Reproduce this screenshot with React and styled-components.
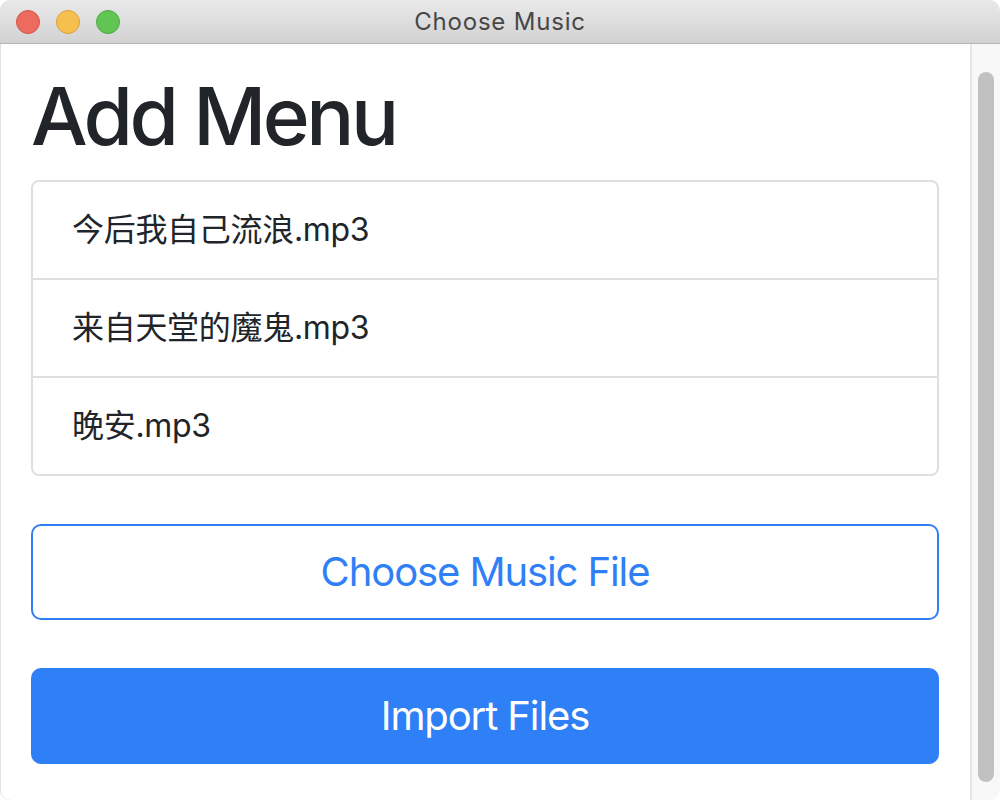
import React from "react";
import styled, { createGlobalStyle } from "styled-components";

const GlobalStyle = createGlobalStyle`
  html, body {
    margin: 0;
    padding: 0;
    background: #ffffff;
  }
  * {
    box-sizing: border-box;
  }
`;

const Window = styled.div`
  width: 1000px;
  height: 800px;
  display: flex;
  flex-direction: column;
  border-radius: 10px;
  overflow: hidden;
  background: #ffffff;
  box-shadow: inset 1px 0 0 #e2e2e2;
  font-family: Inter, "Noto Sans CJK SC", sans-serif;
`;

const TitleBar = styled.div`
  height: 44px;
  flex: none;
  display: flex;
  align-items: center;
  position: relative;
  padding-left: 16px;
  gap: 16px;
  background: linear-gradient(#e9e9e9, #d2d2d2);
  border-bottom: 1px solid #b3b3b3;
  border-radius: 10px 10px 0 0;
`;

const Light = styled.span`
  width: 24px;
  height: 24px;
  border-radius: 50%;
  background: ${(p) => p.color};
  border: 1px solid ${(p) => p.edge};
`;

const WindowTitle = styled.div`
  position: absolute;
  left: 0;
  right: 0;
  top: 0;
  bottom: 0;
  display: flex;
  align-items: center;
  justify-content: center;
  font-size: 24px;
  letter-spacing: 0.8px;
  color: #474747;
  pointer-events: none;
`;

const Body = styled.div`
  flex: 1;
  display: flex;
  min-height: 0;
`;

const Content = styled.main`
  flex: 1;
  padding: 24px 31px 0 31px;
`;

const Heading = styled.h1`
  margin: 0 0 16px;
  font-size: 80px;
  font-weight: 500;
  line-height: 1.2;
  letter-spacing: -3.5px;
  color: #212529;
`;

const ListGroup = styled.ul`
  list-style: none;
  margin: 0;
  padding: 0;
  border: 2px solid #dfdfdf;
  border-radius: 8px;
`;

const ListItem = styled.li`
  padding: 24px 39px;
  font-size: 32px;
  line-height: 48px;
  letter-spacing: -0.3px;
  color: #212529;
  & + & {
    border-top: 2px solid #dfdfdf;
  }
`;

const Button = styled.button`
  display: block;
  width: 100%;
  margin-top: 48px;
  padding: 16px 32px;
  font-family: inherit;
  font-size: 40px;
  line-height: 60px;
  letter-spacing: -1.1px;
  border-radius: 10px;
  border: 2px solid #2f7ff6;
  color: ${(p) => (p.primary ? "#ffffff" : "#2f7ff6")};
  background: ${(p) => (p.primary ? "#2f7ff6" : "#ffffff")};
  cursor: pointer;
`;

const ScrollTrack = styled.div`
  width: 30px;
  flex: none;
  background: #f8f8f8;
  border-left: 2px solid #e6e6e6;
  padding: 28px 6px 18px 6px;
  display: flex;
  border-bottom-right-radius: 10px;
`;

const ScrollThumb = styled.div`
  flex: 1;
  border-radius: 8px;
  background: #c1c1c1;
`;

const files = ["今后我自己流浪.mp3", "来自天堂的魔鬼.mp3", "晚安.mp3"];

export default function App() {
  return (
    <>
      <GlobalStyle />
      <Window>
        <TitleBar>
          <Light color="#ed6a5e" edge="#d5554a" />
          <Light color="#f5c04f" edge="#d9a03a" />
          <Light color="#61c554" edge="#4ea843" />
          <WindowTitle>Choose Music</WindowTitle>
        </TitleBar>
        <Body>
          <Content>
            <Heading>Add Menu</Heading>
            <ListGroup>
              {files.map((f) => (
                <ListItem key={f}>{f}</ListItem>
              ))}
            </ListGroup>
            <Button>Choose Music File</Button>
            <Button primary>Import Files</Button>
          </Content>
          <ScrollTrack>
            <ScrollThumb />
          </ScrollTrack>
        </Body>
      </Window>
    </>
  );
}
